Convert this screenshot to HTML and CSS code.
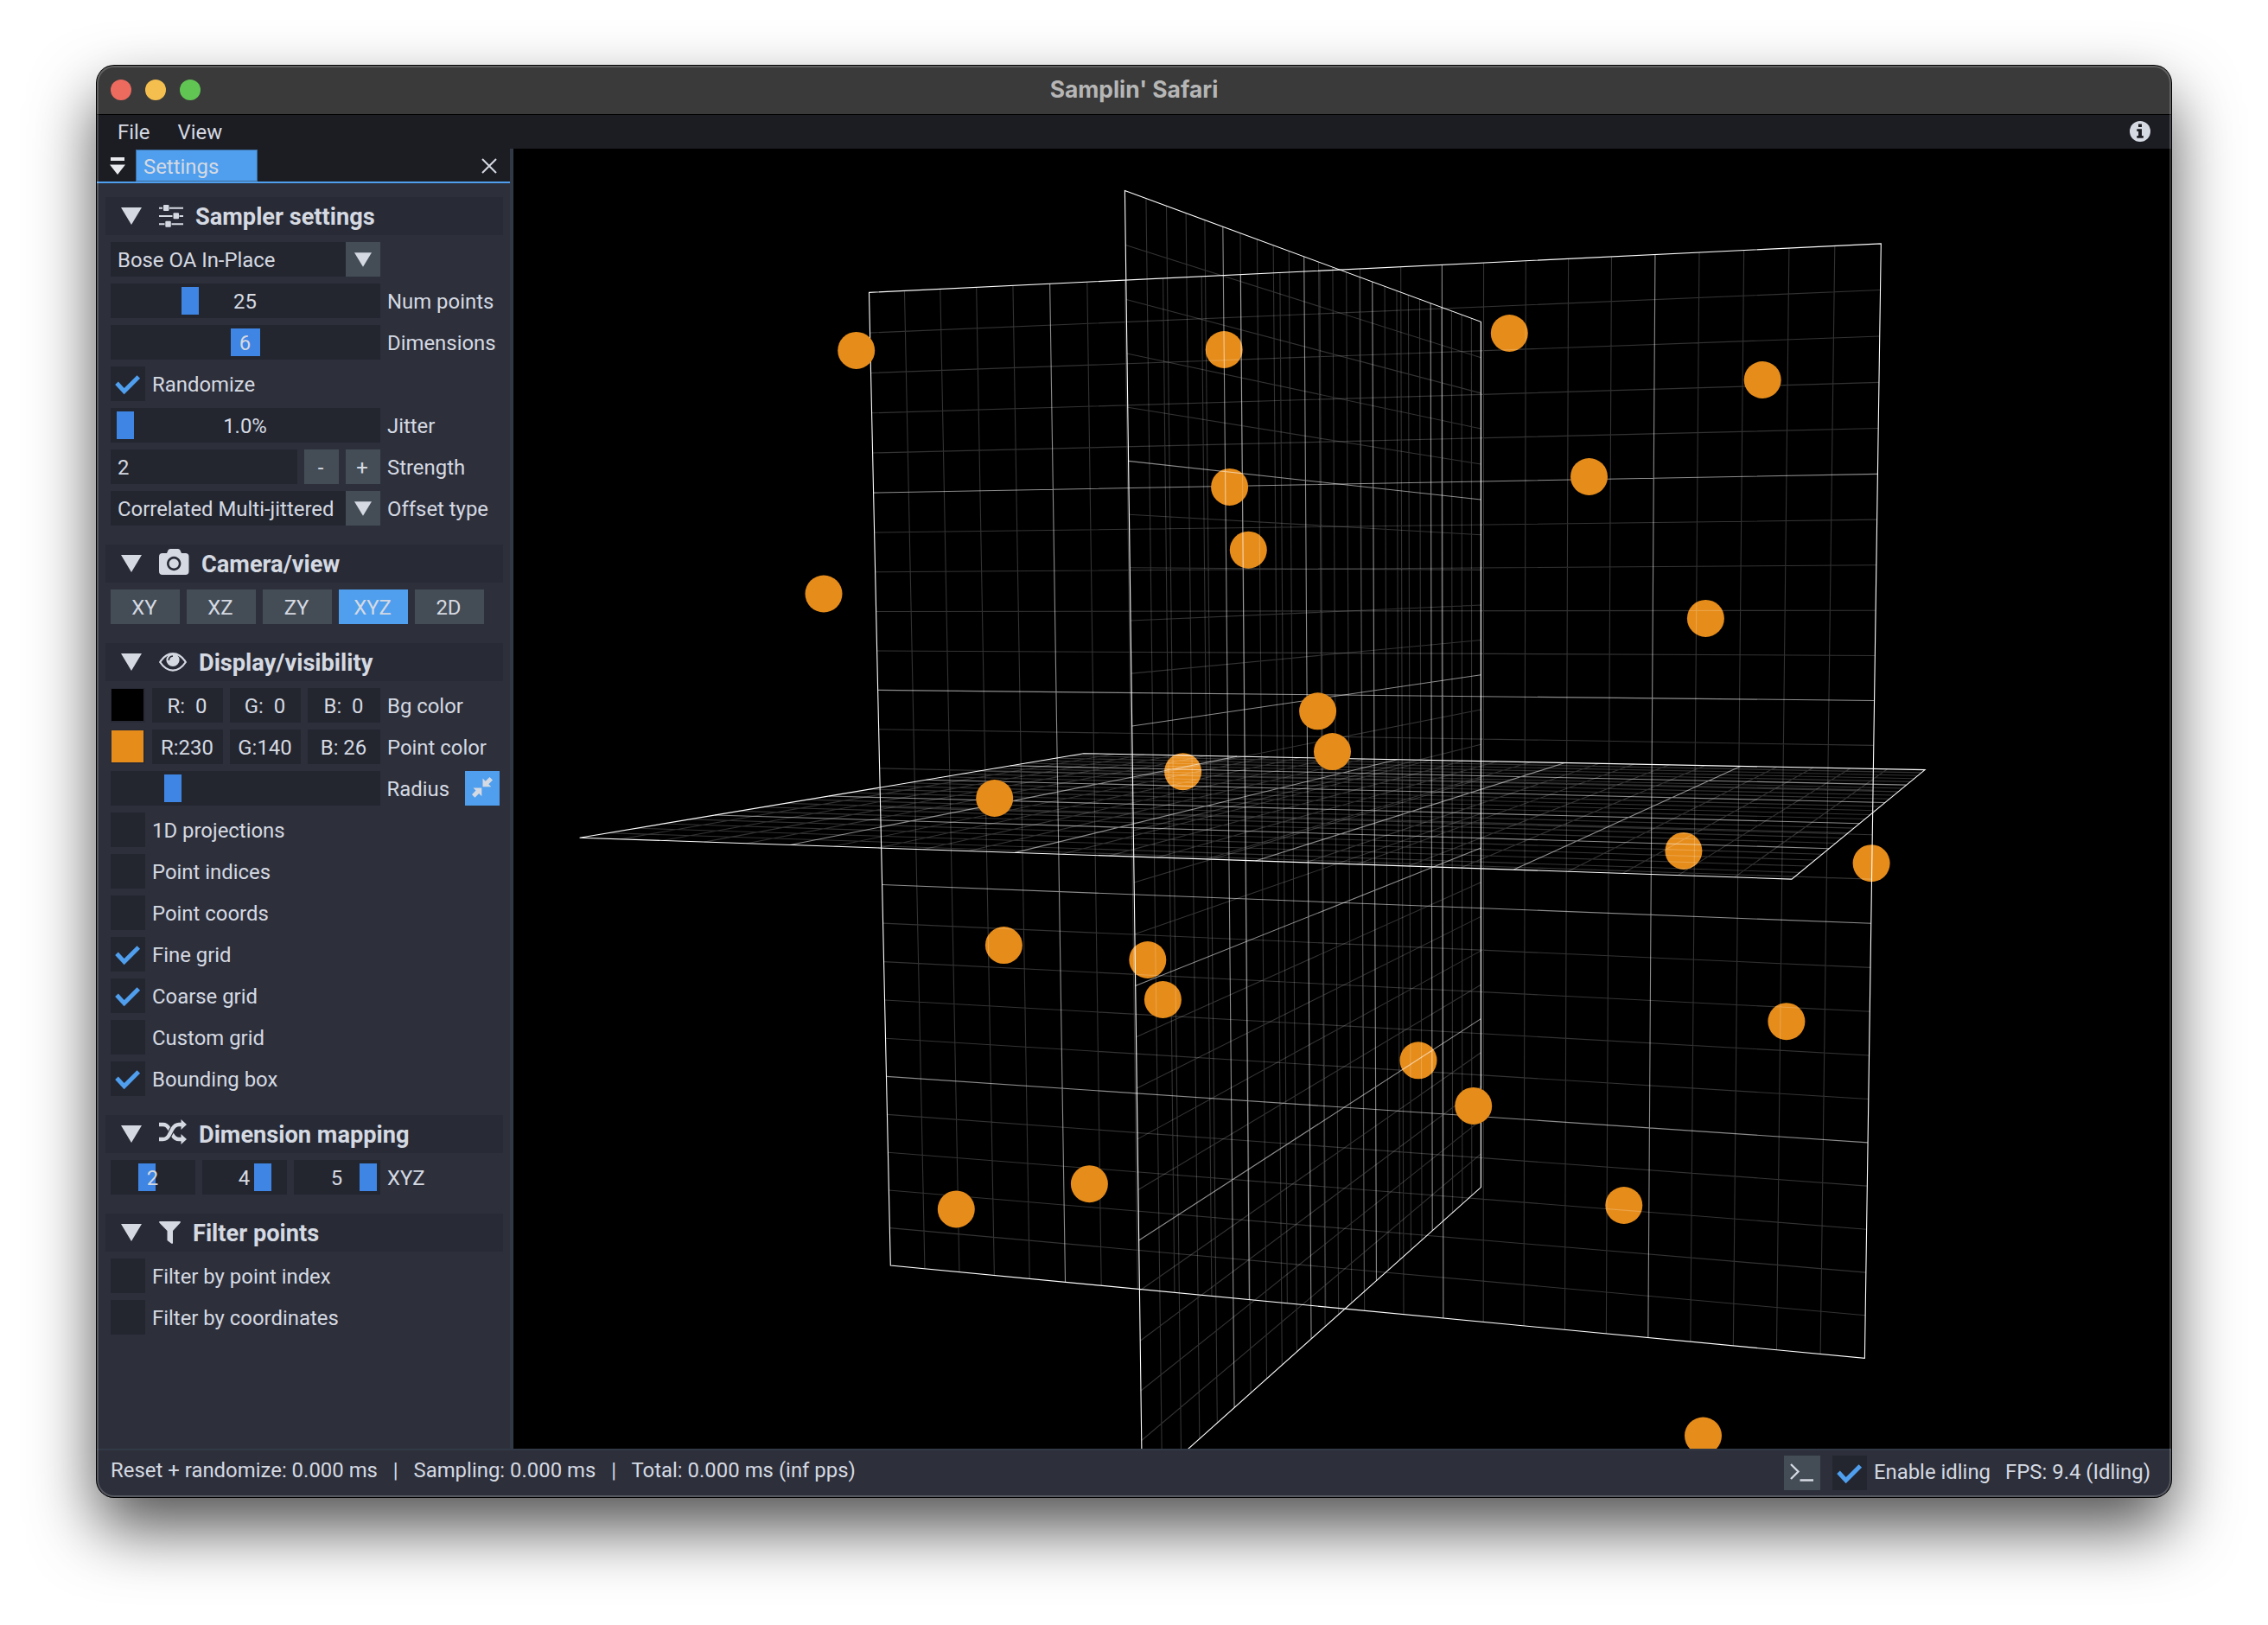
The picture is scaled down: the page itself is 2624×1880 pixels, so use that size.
FILE: index.html
```html
<!DOCTYPE html>
<html lang="en">
<head>
<meta charset="utf-8">
<title>Samplin' Safari</title>
<link rel="stylesheet" href="styles.css">
</head>
<body>
<svg width="0" height="0" class="defs">
  <symbol id="check" viewBox="0 0 40 40"><path d="M7 19.3 15.7 28.6 32.3 12" fill="none" stroke="#4f9fee" stroke-width="5"/></symbol>
  <symbol id="tri" viewBox="0 0 24 20"><path d="M0 0h24L12 20z" fill="#d5d9e2"/></symbol>
</svg>
<div class="window">
  <header class="titlebar">
    <div class="lights"><i class="red"></i><i class="yellow"></i><i class="green"></i></div>
    <span class="title">Samplin' Safari</span>
  </header>
  <nav class="menubar">
    <span>File</span><span>View</span>
    <svg class="info" width="24" height="24" viewBox="0 0 24 24"><circle cx="12" cy="12" r="12" fill="#d5d9e2"/><path d="M10 3.500h4v3.600h-4zM8.300 9.200H14v7.800h1.800v2.800H8.300V17h1.800v-5H8.300z" fill="#1c1d23"/></svg>
  </nav>
  <main class="main">
    <aside class="sidebar">
      <div class="tabs">
        <svg class="tabmenu" width="18" height="20" viewBox="0 0 18 20"><path d="M1 0h16v4H1zM0 8.500h18L9 20z" fill="#e8eaee"/></svg>
        <span class="tab">Settings</span>
        <svg class="close" width="18" height="18" viewBox="0 0 18 18"><path d="M1 1l16 16M17 1L1 17" stroke="#d5d9e2" stroke-width="2"/></svg>
      </div>
      <div class="panel">
        <h2><svg class="caret"><use href="#tri"/></svg><svg class="icon" width="28" height="26" viewBox="0 0 28 26" fill="#d5d9e2"><path d="M0 2.700h28v2H0zM0 12h28v2H0zM0 21.300h28v2H0z"/><path class="halo" d="M4 0h8v7H4zM15.500 9h8v8h-8zM6.500 18h8v8h-8z"/><rect x="5" y="0" width="6.500" height="7" rx="1"/><rect x="16.500" y="9.300" width="6.500" height="7" rx="1"/><rect x="7.300" y="18.700" width="6.500" height="7" rx="1"/></svg><span>Sampler settings</span></h2>
        <div class="row"><div class="field combo"><span>Bose OA In-Place</span><b class="btn"><svg class="down"><use href="#tri"/></svg></b></div></div>
        <div class="row"><div class="field slider"><i style="left:82px"></i><span>25</span></div><label>Num points</label></div>
        <div class="row"><div class="field slider"><i class="wide" style="left:139px"></i><span>6</span></div><label>Dimensions</label></div>
        <div class="row"><div class="box"><svg><use href="#check"/></svg></div><label>Randomize</label></div>
        <div class="row"><div class="field slider"><i style="left:7px"></i><span>1.0%</span></div><label>Jitter</label></div>
        <div class="row"><div class="stepper"><div class="field input">2</div><b class="btn text">-</b><b class="btn text">+</b></div><label>Strength</label></div>
        <div class="row"><div class="field combo"><span>Correlated Multi-jittered</span><b class="btn"><svg class="down"><use href="#tri"/></svg></b></div><label>Offset type</label></div>

        <h2><svg class="caret"><use href="#tri"/></svg><svg class="icon camera" width="35" height="30" viewBox="0 0 35 30"><path fill-rule="evenodd" fill="#d5d9e2" d="M4 5h5l1.500-3.500Q11.200 0 13 0h9q1.700 0 2.400 1.500L26 5h4.500Q34.500 5 34.500 9v17q0 4-4 4H4q-4 0-4-4V9Q0 5 4 5zM17.200 8.800a8.200 8.200 0 1 0 .01 0zM17.200 11.400a5.600 5.600 0 1 1-.01 0z"/></svg><span>Camera/view</span></h2>
        <div class="row views"><b class="btn text">XY</b><b class="btn text">XZ</b><b class="btn text">ZY</b><b class="btn text on">XYZ</b><b class="btn text">2D</b></div>

        <h2><svg class="caret"><use href="#tri"/></svg><svg class="icon" width="32" height="22" viewBox="0 0 32 22"><path d="M1.200 11Q7.500 1.200 16 1.200T30.800 11Q24.500 20.600 16 20.600T1.200 11z" fill="none" stroke="#d5d9e2" stroke-width="2.200"/><circle cx="16" cy="8.500" r="7.600" fill="#d5d9e2"/><path d="M11.300 9q0-4.500 4.700-5" fill="none" stroke="#282b35" stroke-width="1.700"/></svg><span>Display/visibility</span></h2>
        <div class="row"><div class="rgb"><i class="swatch black"></i><span class="field">R:  0</span><span class="field">G:  0</span><span class="field">B:  0</span></div><label>Bg color</label></div>
        <div class="row"><div class="rgb"><i class="swatch orange"></i><span class="field">R:230</span><span class="field">G:140</span><span class="field">B: 26</span></div><label>Point color</label></div>
        <div class="row"><div class="field slider"><i style="left:62px"></i></div><label>Radius</label><b class="btn on shrink"><svg width="24" height="24" viewBox="0 0 24 24" fill="#d5d9e2"><path d="M12.500 1.500v9.800h9.800l-3-3L24 3.500 20.500 0l-4.800 4.700zM11.300 22.300v-9.800H1.500l3 3L0 20.300l3.500 3.500 4.600-4.700z"/></svg></b></div>
        <div class="row"><div class="box"></div><label>1D projections</label></div>
        <div class="row"><div class="box"></div><label>Point indices</label></div>
        <div class="row"><div class="box"></div><label>Point coords</label></div>
        <div class="row"><div class="box"><svg><use href="#check"/></svg></div><label>Fine grid</label></div>
        <div class="row"><div class="box"><svg><use href="#check"/></svg></div><label>Coarse grid</label></div>
        <div class="row"><div class="box"></div><label>Custom grid</label></div>
        <div class="row"><div class="box"><svg><use href="#check"/></svg></div><label>Bounding box</label></div>

        <h2><svg class="caret"><use href="#tri"/></svg><svg class="icon raised" width="32" height="29" viewBox="0 0 32 29"><path d="M0 6h4.500Q9 6 11.500 10.500l4 7.500Q18.500 23 23 23h4" fill="none" stroke="#d5d9e2" stroke-width="4.400"/><path d="M10 21Q10.800 20 11.500 18.500l4-7.500Q16.500 9 18 7.500" fill="none" stroke="#282b35" stroke-width="6.600"/><path d="M0 23h4.500Q9 23 11.500 18.500l4-7.500Q18.500 6 23 6h4" fill="none" stroke="#d5d9e2" stroke-width="4.400"/><path d="M25.500 0L32 6l-6.500 6zM25.500 17L32 23l-6.500 6z" fill="#d5d9e2"/></svg><span>Dimension mapping</span></h2>
        <div class="row"><div class="triple"><div class="field slider"><i style="left:32px"></i><span>2</span></div><div class="field slider"><i style="left:60px"></i><span>4</span></div><div class="field slider"><i style="left:76px"></i><span>5</span></div></div><label>XYZ</label></div>

        <h2><svg class="caret"><use href="#tri"/></svg><svg class="icon" width="25" height="26" viewBox="0 0 25 26"><path d="M.5 0h24q.8 1-.2 2L16 11v14.500q-1.200.6-2 0l-4.500-3.500V11L.7 2Q-.3 1 .5 0z" fill="#d5d9e2"/></svg><span>Filter points</span></h2>
        <div class="row"><div class="box"></div><label>Filter by point index</label></div>
        <div class="row"><div class="box"></div><label>Filter by coordinates</label></div>
      </div>
    </aside>
    <svg class="viewport" id="viewport" width="1918" height="1504" viewBox="594 172 1918 1504"></svg>
  </main>
  <footer class="status">
    <span class="timing">Reset + randomize: 0.000 ms   |   Sampling: 0.000 ms   |   Total: 0.000 ms (inf pps)</span>
    <b class="btn console"><svg width="28" height="22" viewBox="0 0 28 22"><path d="M1 1l8.500 8.500L1 18M11.500 19.500H27" fill="none" stroke="#d5d9e2" stroke-width="2.300"/></svg></b>
    <div class="box"><svg><use href="#check"/></svg></div>
    <span class="idle">Enable idling</span>
    <span>FPS: 9.4 (Idling)</span>
  </footer>
</div>
<script src="scene.js"></script>
</body>
</html>
```
FILE: styles.css
```css
* { box-sizing: border-box; }
body {
  margin: 0;
  width: 2624px;
  height: 1880px;
  padding: 76px 112px 148px;
  overflow: hidden;
  background: #fff;
  color: #d5d9e2;
  font: 23.9px/28px Roboto, sans-serif;
}
.defs { position: absolute; }
b, i { font-weight: 400; font-style: normal; }
svg { display: block; flex: none; }

.window {
  position: relative;
  display: flex;
  flex-direction: column;
  width: 2400px;
  height: 1656px;
  border-radius: 20px;
  overflow: hidden;
  background: #2d303b;
  box-shadow: 0 0 0 1px #000, 0 36px 75px rgba(0, 0, 0, .68);
}
/* inner light rim drawn over the whole window */
.window::after {
  content: "";
  position: absolute;
  inset: 0;
  border-radius: 20px;
  box-shadow: inset 0 0 0 2px rgba(255, 255, 255, .2);
  pointer-events: none;
}
.titlebar {
  display: grid;
  grid-template-columns: 1fr auto 1fr;
  align-items: center;
  height: 57px;
  padding: 0 16px;
  background: #3a3a3a;
  border-bottom: 1px solid #000;
}
.lights { display: flex; gap: 16px; }
.lights i { width: 24px; height: 24px; border-radius: 50%; }
.red { background: #ed6a5e; }
.yellow { background: #f5bf4f; }
.green { background: #61c554; }
.title { padding-bottom: 3px; font: 700 26.400px/30px Inter, sans-serif; color: #b6b6b6; }

.menubar {
  display: flex;
  align-items: center;
  gap: 32px;
  height: 39px;
  padding: 0 24px;
  background: #1c1d23;
}
.info { margin: 0 0 2px auto; }

.main { display: flex; height: 1504px; }
.sidebar {
  width: 482px;
  border-right: 4px solid #323946;
}
.tabs {
  display: flex;
  align-items: center;
  height: 40px;
  padding: 0 15px;
  background: #1c1d23;
  border-bottom: 2px solid #4f9fee;
}
.tabmenu, .close { margin-top: 2px; }
.tab {
  width: 141px;
  height: 37px;
  margin: 1px 0 0 12px;
  padding: 5px 8px;
  background: #4f9fee;
  border: 1px solid #3d6a9a;
}
.close { margin-left: auto; }
.panel { padding: 16px 12px 0 10px; }

h2 {
  display: flex;
  align-items: center;
  height: 44px;
  margin: 22px -4px 8px 0;
  padding-left: 18px;
  background: #282b35;
  font: 700 27.200px/32px Roboto, sans-serif;
}
h2:first-child { margin-top: 0; }
h2 span { padding-top: 2px; }
.caret { width: 24px; height: 20px; margin-right: 20px; }
.icon { margin-right: 14px; }
.camera { margin-bottom: 4px; }
.raised { margin-bottom: 5px; }
.halo { fill: #282b35; }
.down { width: 20px; height: 17px; }

.row {
  display: flex;
  gap: 8px;
  height: 40px;
  margin: 0 0 8px 6px;
}
.row label { padding: 7px 0; }
.field { background: #23262f; }
.combo, .slider { width: 312px; }
.combo { display: flex; justify-content: space-between; }
.combo span, .input { padding: 7px 8px; }
.btn {
  display: flex;
  align-items: center;
  justify-content: center;
  width: 40px;
  height: 40px;
  background: #444d56;
}
.text { padding: 2px 2px 0 0; }
.on { background: #4f9fee; }
.slider { position: relative; padding: 7px 1px 0 0; text-align: center; }
.slider i {
  position: absolute;
  top: 4px;
  width: 20px;
  height: 32px;
  background: #3f85e3;
}
.slider .wide { width: 34px; }
.slider span { position: relative; }
.stepper { display: flex; gap: 8px; }
.input { width: 216px; }
.views .btn { width: 80px; }
.box { width: 40px; height: 40px; background: #23262f; }
.box svg { width: 40px; height: 40px; }
.rgb {
  display: grid;
  grid-template-columns: 40px 82px 82px 84px;
  gap: 8px;
}
.rgb .field { padding: 7px 1px 0 0; text-align: center; white-space: pre; }
.swatch { border: 1px solid #282b35; border-width: 1px 2px 2px 1px; }
.black { background: #000; }
.orange { background: #e68c1a; }
.shrink { margin-left: 10px; padding-bottom: 2px; }
.triple { display: grid; grid-template-columns: 98px 98px 100px; gap: 8px; }
.triple .slider { width: auto; }

.viewport { background: #000; }
.viewport path { stroke: #fff; stroke-width: 1.1; fill: none; }
.viewport .fine { stroke-opacity: .2; }
.viewport .coarse { stroke-opacity: .55; }
.viewport circle { fill: #e68c1a; }

.status {
  display: flex;
  height: 56px;
  padding: 6px 24px 0 16px;
  border-top: 2px solid #323946;
}
.status span { padding-top: 5px; }
.status .timing { flex: 1; padding-top: 3px; white-space: pre; letter-spacing: .015px; }
.console { width: 42px; margin-right: 14px; }
.idle { margin: 0 17px 0 8px; }
```
FILE: scene.js
```js
// Projected corners of the three unit planes, in order (0,0) (1,0) (1,1) (0,1).
const planes = {
  xz: [[670.6, 969.2], [2073, 1017.1], [2227.1, 890.6], [1253.8, 871.7]],
  xy: [[1005.5, 338.4], [2176.3, 281.9], [2157.4, 1571.4], [1030.3, 1464.1]],
  zy: [[1301.4, 220.5], [1713.4, 372.3], [1713.4, 1373.6], [1321.5, 1723.8]]
};

// Sample points: x, y and the planes whose lines pass in front.
const points = [
  [990.7, 405.4, ''], [1416.2, 404.5, 'xy zy'], [1746.3, 385.5, 'xy'],
  [1422.6, 563.4, 'zy'], [1444.3, 636.2, 'xy zy'], [1524.6, 822.8, ''],
  [1541.5, 869.6, ''], [1150.7, 923.5, ''], [1368.6, 892.7, 'xz xy zy'],
  [1161.4, 1093.6, 'xy'], [1327.8, 1110.5, 'xy zy'], [1345.4, 1156.5, 'zy'],
  [1260.4, 1369.7, ''], [1106.3, 1398.9, ''], [1947.9, 984.4, 'xz xy'],
  [2165.1, 998.7, 'xy'], [2066.9, 1181.7, 'xy'], [1641, 1226.8, 'zy'],
  [1704.7, 1279.4, ''], [1878.8, 1394.5, 'xy'], [2039.2, 439.5, ''],
  [1838.5, 551.5, ''], [1973.4, 715.4, 'xy'], [1970.5, 1661, ''], [953, 687, '']
];

// Projective map from the unit square to a quad.
function project(q) {
  const [[x0, y0], [x1, y1], [x2, y2], [x3, y3]] = q;
  const dx1 = x1 - x2, dx2 = x3 - x2, sx = x0 - x1 + x2 - x3;
  const dy1 = y1 - y2, dy2 = y3 - y2, sy = y0 - y1 + y2 - y3;
  const det = dx1 * dy2 - dx2 * dy1;
  const g = (sx * dy2 - dx2 * sy) / det, h = (dx1 * sy - sx * dy1) / det;
  return (u, v) => {
    const w = g * u + h * v + 1;
    return [((x1 - x0 + g * x1) * u + (x3 - x0 + h * x3) * v + x0) / w,
            ((y1 - y0 + g * y1) * u + (y3 - y0 + h * y3) * v + y0) / w]
      .map(n => n.toFixed(2)).join(' ');
  };
}

function grid(name) {
  const p = project(planes[name]);
  let fine = '', coarse = '';
  for (let i = 1; i < 25; i++) {
    const t = i / 25;
    const d = `M${p(t, 0)}L${p(t, 1)}M${p(0, t)}L${p(1, t)}`;
    if (i % 5) fine += d; else coarse += d;
  }
  return `<g id="${name}"><path class="fine" d="${fine}"/><path class="coarse" d="${coarse}"/>` +
    `<path class="edge" d="M${planes[name].join('L')}Z"/></g>`;
}

let out = Object.keys(planes).map(grid).join('');
points.forEach(([x, y, front], i) => {
  out += `<circle cx="${x}" cy="${y}" r="21.5"/>`;
  if (front) {
    out += `<clipPath id="c${i}"><circle cx="${x}" cy="${y}" r="21.5"/></clipPath><g clip-path="url(#c${i})">` +
      front.split(' ').map(n => `<use href="#${n}"/>`).join('') + '</g>';
  }
});
document.getElementById('viewport').innerHTML = out;
```
